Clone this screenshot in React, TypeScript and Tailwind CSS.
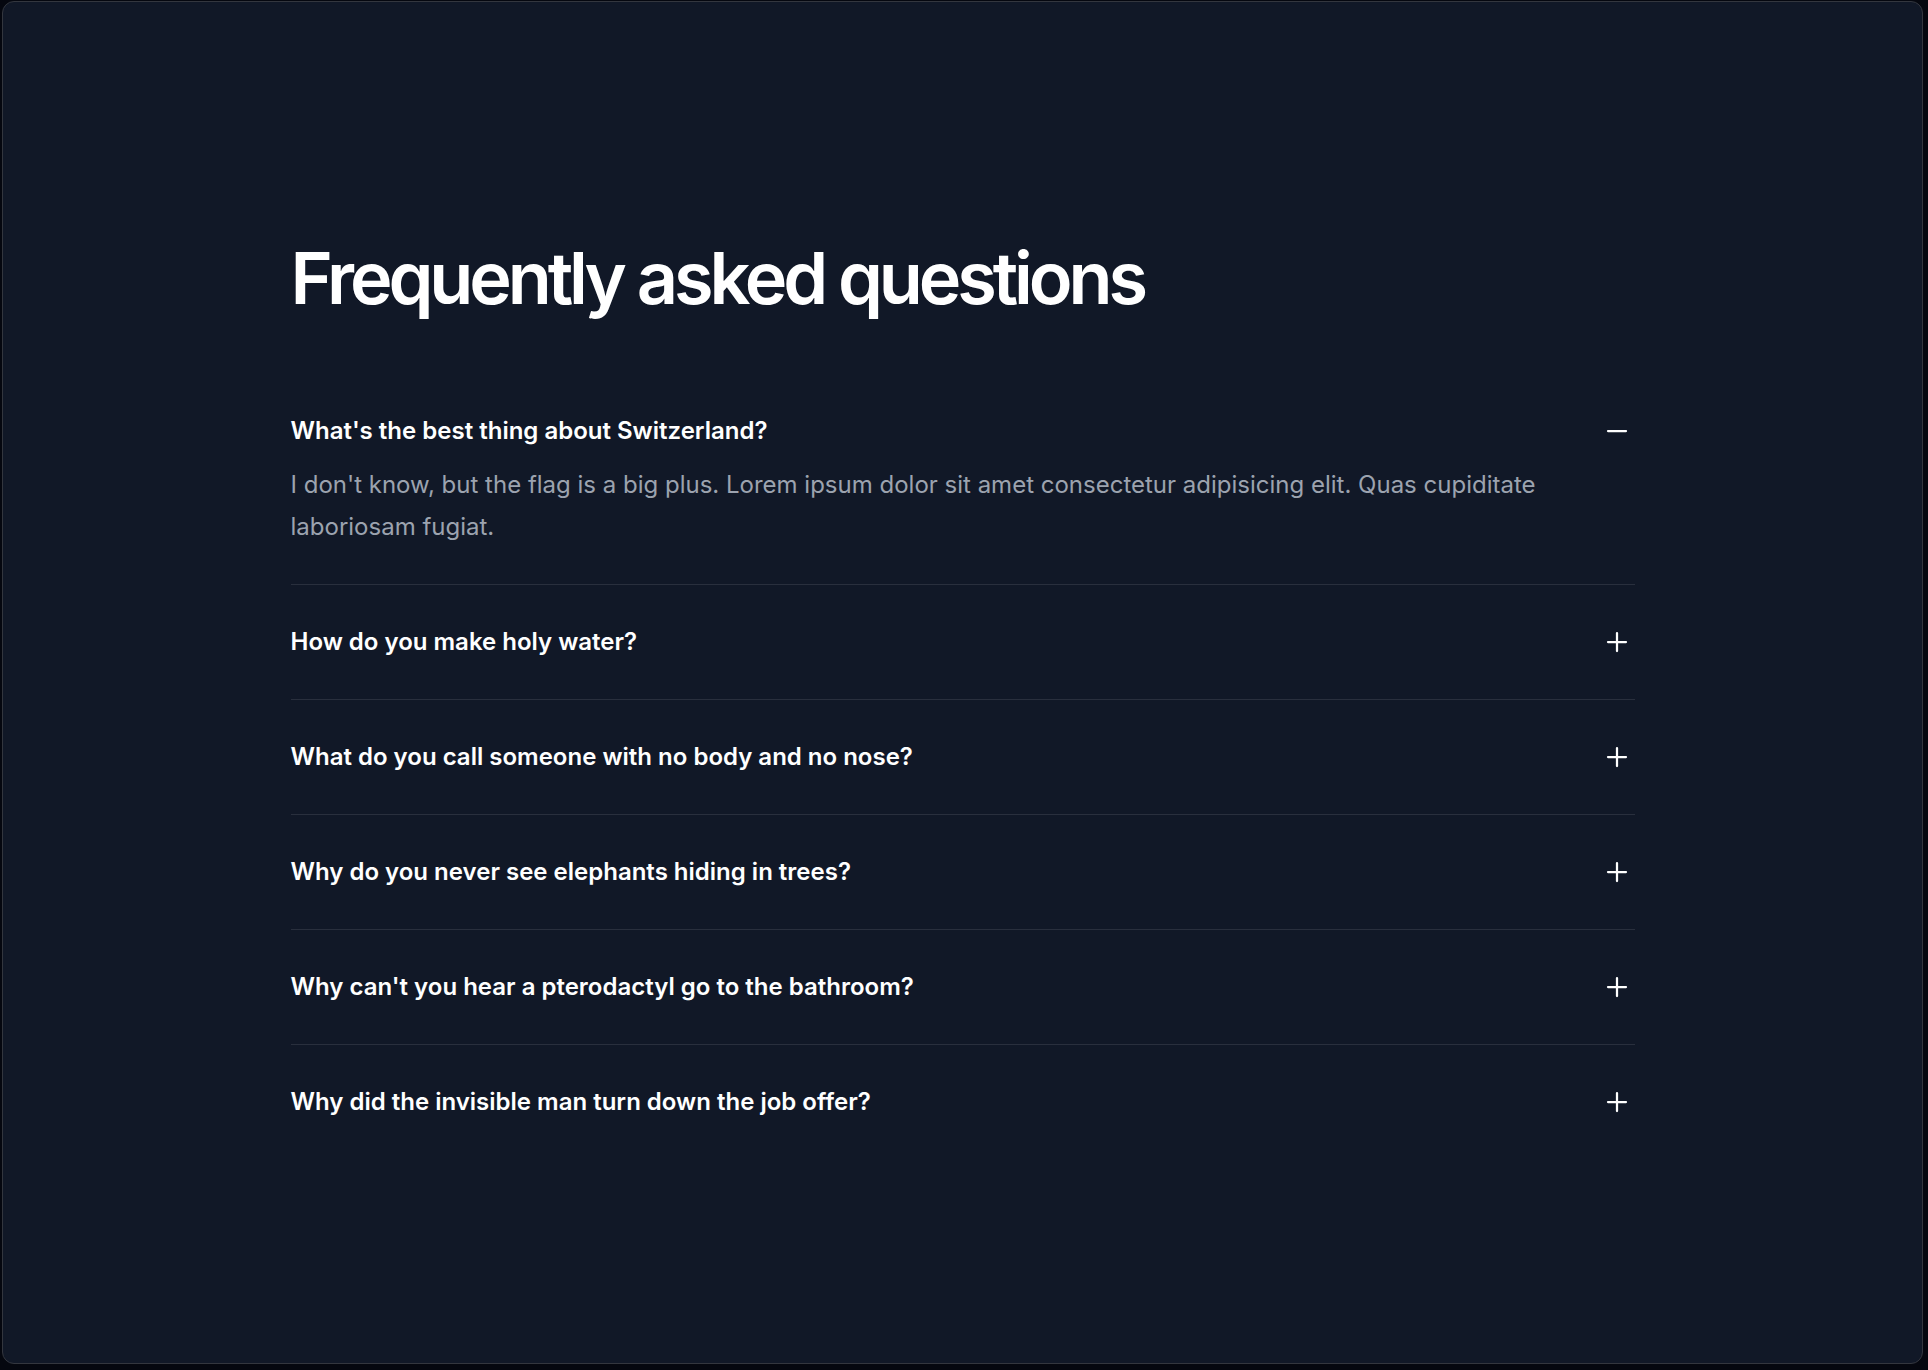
const FAQS = [
  {
    question: "What's the best thing about Switzerland?",
    answer:
      "I don't know, but the flag is a big plus. Lorem ipsum dolor sit amet consectetur adipisicing elit. Quas cupiditate laboriosam fugiat.",
    open: true,
  },
  { question: 'How do you make holy water?', open: false },
  { question: 'What do you call someone with no body and no nose?', open: false },
  { question: 'Why do you never see elephants hiding in trees?', open: false },
  { question: "Why can't you hear a pterodactyl go to the bathroom?", open: false },
  { question: 'Why did the invisible man turn down the job offer?', open: false },
];

function ToggleIcon({ open }: { open: boolean }) {
  return (
    <svg viewBox="0 0 24 24" fill="none" stroke="currentColor" strokeWidth={1.5} className="size-9" aria-hidden="true">
      {open ? (
        <path strokeLinecap="round" strokeLinejoin="round" d="M18 12H6" />
      ) : (
        <path strokeLinecap="round" strokeLinejoin="round" d="M12 6v12m6-6H6" />
      )}
    </svg>
  );
}

export default function App() {
  return (
    <div
      className="min-h-screen bg-[#05070f] pl-[2px] pt-[1px] pr-[5px] pb-[6px]"
      style={{ fontFamily: 'Inter, "Noto Sans", sans-serif' }}
    >
      <div className="rounded-[12px] border border-[#33363e] bg-[#111827] px-12 py-[240px]">
        <div className="mx-auto max-w-[1344px]">
          <h2 className="text-[72px] leading-[72px] font-semibold tracking-[-0.057em] text-white">
            Frequently asked questions
          </h2>
          <dl className="mt-[96px] divide-y divide-white/10">
            {FAQS.map((faq, i) => (
              <div key={faq.question} className={`py-[36px] ${i === 0 ? 'pt-0' : ''} ${i === FAQS.length - 1 ? 'pb-0' : ''}`}>
                <dt>
                  <button type="button" className="flex w-full items-start justify-between text-left text-white">
                    <span className="text-[24px] leading-[42px] font-semibold">{faq.question}</span>
                    <span className="ml-9 flex h-[42px] items-center">
                      <ToggleIcon open={faq.open} />
                    </span>
                  </button>
                </dt>
                {faq.open && (
                  <dd className="mt-3 pr-[72px]">
                    <p className="text-[24px] leading-[42px] text-[#9ca3af]">{faq.answer}</p>
                  </dd>
                )}
              </div>
            ))}
          </dl>
        </div>
      </div>
    </div>
  );
}
